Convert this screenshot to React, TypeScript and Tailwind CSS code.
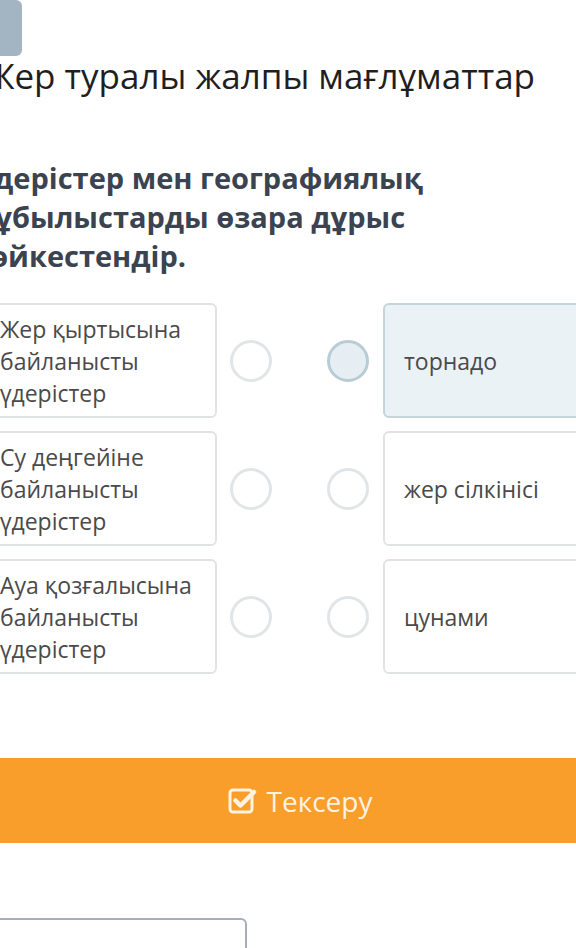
import React from 'react';

const lefts = [
  ['Жер қыртысына', 'байланысты', 'үдерістер'],
  ['Су деңгейіне', 'байланысты', 'үдерістер'],
  ['Ауа қозғалысына', 'байланысты', 'үдерістер'],
];

const rights = ['торнадо', 'жер сілкінісі', 'цунами'];

function CheckSquare() {
  return (
    <svg width="29" height="27" viewBox="0 0 29 27" fill="none">
      <rect x="2" y="3" width="22" height="22" rx="3" stroke="#fdf3e3" strokeWidth="3" />
      <path d="M7.5 13.5 L12.5 18.5 L26 5" stroke="#fdf3e3" strokeWidth="4.5" strokeLinecap="round" strokeLinejoin="round" />
    </svg>
  );
}

export default function App() {
  return (
    <div className="w-[576px] h-[948px] overflow-hidden bg-white font-['Open_Sans',sans-serif]">
      <div className="ml-[-15px] w-[630px]">
        {/* top thumbnail */}
        <div className="h-[56px] w-[37px] rounded-md bg-[#a3b4c3]" />

        <h1 className="mt-0 text-[35px] leading-[40px] text-[#1f1f1f] whitespace-nowrap">
          Жер туралы жалпы мағлұматтар
        </h1>

        <p className="mt-[62px] ml-[-9px] w-[540px] text-[29px] leading-[39px] font-bold text-[#3b4350]">
          Үдерістер мен географиялық
          <br />
          құбылыстарды өзара дұрыс
          <br />
          сәйкестендір.
        </p>

        {/* matching rows */}
        <div className="mt-[28px] flex flex-col gap-[13px]">
          {lefts.map((lines, i) => {
            const selected = i === 0;
            return (
              <div key={i} className="flex items-center h-[115px]">
                <div className="w-[232px] h-full rounded-md border-2 border-[#e0e3e6] bg-white px-[13px] flex flex-col justify-center text-[23px] leading-[32px] text-[#4a4a4a]">
                  {lines.map((l) => (
                    <span key={l}>{l}</span>
                  ))}
                </div>
                <div className="ml-[13px] w-[42px] h-[42px] rounded-full border-[3px] border-[#e1e5e8] bg-white" />
                <div
                  className={`ml-[55px] w-[42px] h-[42px] rounded-full border-[3px] ${
                    selected ? 'border-[#b7ccd5] bg-[#e6eef3]' : 'border-[#e1e5e8] bg-white'
                  }`}
                />
                <div
                  className={`ml-[14px] w-[232px] h-full rounded-md border-2 px-[19px] flex items-center text-[23px] leading-[32px] text-[#4a4a4a] ${
                    selected ? 'border-[#c4d4db] bg-[#eaf2f6]' : 'border-[#e0e3e6] bg-white'
                  }`}
                >
                  {rights[i]}
                </div>
              </div>
            );
          })}
        </div>

        <button className="mt-[84px] w-[630px] h-[85px] rounded-lg bg-[#f99d2b] flex items-center justify-center gap-[10px] text-[28px] text-[#fdf3e3]">
          <CheckSquare />
          <span>Тексеру</span>
        </button>

        <div className="mt-[75px] w-[262px] h-[60px] rounded-md border-2 border-[#a7aeb5] bg-white" />
      </div>
    </div>
  );
}
